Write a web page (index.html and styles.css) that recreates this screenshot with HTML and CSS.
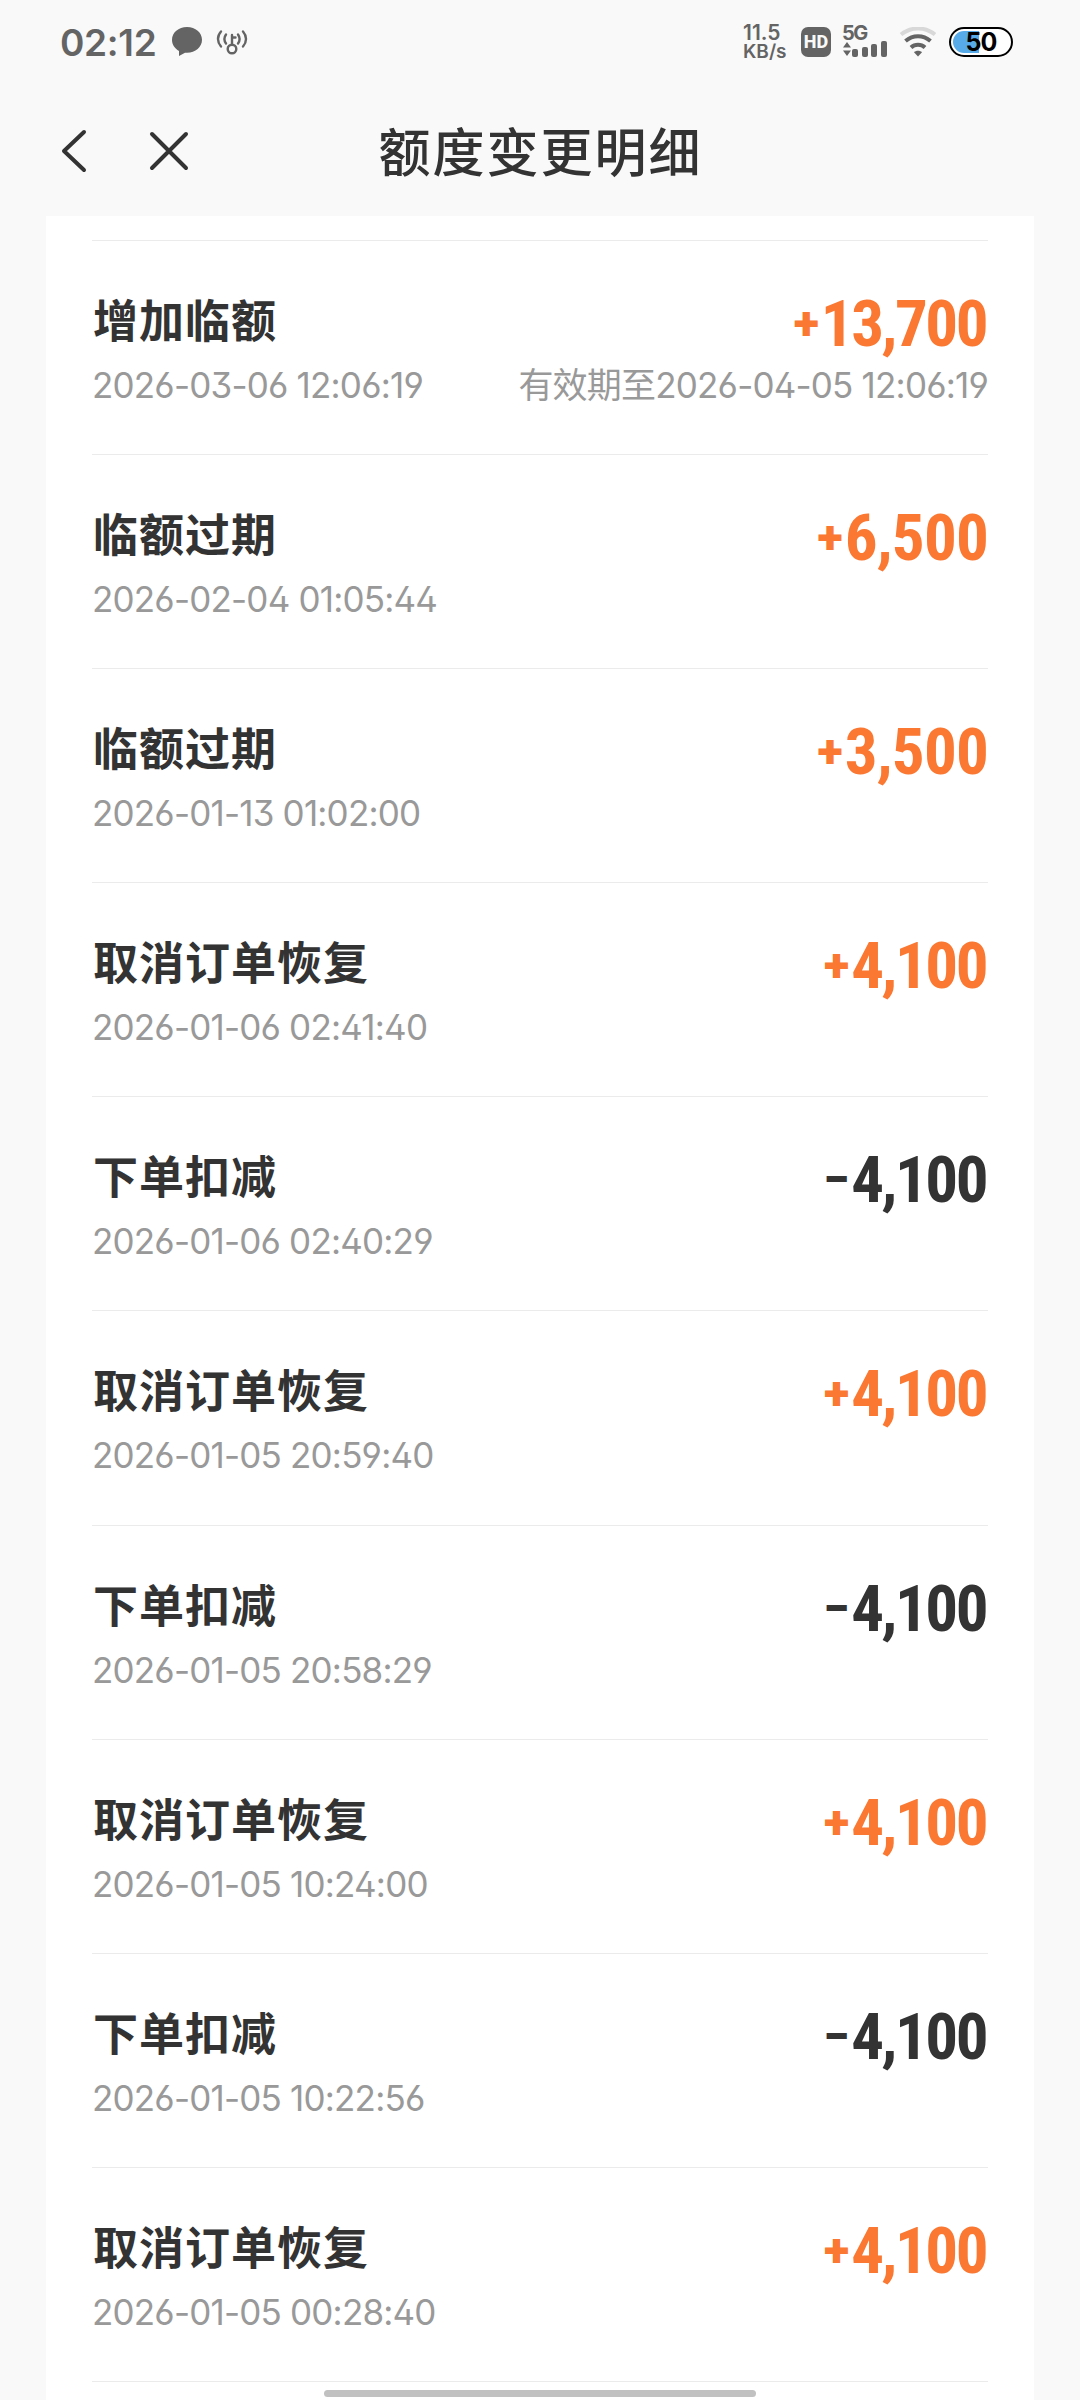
FILE: index.html
```html
<!DOCTYPE html>
<html lang="zh-CN">
  <head>
    <meta charset="UTF-8" />
    <title>额度变更明细</title>
    <link rel="stylesheet" href="styles.css">
  </head>
  <body>
    <!-- Phone status bar -->
    <div class="status-bar">
      <div class="status-left">
        <span class="clock">02:12</span>
        <svg class="icon-chat" width="32" height="32" viewBox="0 0 32 32">
          <path d="M16 1C7.500 1 1 6.500 1 13.800c0 4.900 2.700 8.800 7 11.100v5l6-3.200c.6.100 1.300.100 2 .100 8.500 0 15-5.700 15-13S24.500 1 16 1z" fill="#646464"/>
        </svg>
        <svg class="icon-key" width="32" height="28" viewBox="0 0 32 28" fill="none" stroke="#646464" stroke-width="2.400" stroke-linecap="round">
          <circle cx="16" cy="21" r="4.300"/>
          <path d="M16 16V7M16 9.500h3.500"/>
          <path d="M10 6.500c-2 2.800-2 6.200 0 9M22 6.500c2 2.800 2 6.200 0 9M5 3.500c-4 4.500-4 10.500 0 15M27 3.500c4 4.500 4 10.500 0 15"/>
        </svg>
      </div>
      <div class="status-right">
        <div class="net-speed"><span class="speed-num">11.5</span><span class="speed-unit">KB/s</span></div>
        <span class="hd">HD</span>
        <div class="signal">
          <span class="net-type">5G</span>
          <svg width="46" height="17" viewBox="0 0 46 17" fill="#646464">
            <path d="M1 6.500L5 1l4 5.500zM1 9.500L5 15l4-5.500z"/>
            <rect x="10" y="8" width="6" height="8" rx="2"/>
            <rect x="20" y="6" width="6" height="10" rx="2"/>
            <rect x="29" y="3" width="6" height="13" rx="2"/>
            <rect x="39" y="0" width="6" height="16" rx="2"/>
          </svg>
        </div>
        <svg class="icon-wifi" width="38" height="30" viewBox="0 0 38 30" fill="none" stroke="#646464" stroke-width="4">
          <path d="M2 7.500c10-8 24-8 34 0" stroke="#d8d8d8"/>
          <path d="M6.500 14c7.500-6.500 17.500-6.500 25 0M12 20.500c4-3.600 10-3.600 14 0"/>
          <path d="M19 29.500l-4-4.300c2-2 6-2 8 0z" fill="#646464" stroke="none"/>
        </svg>
        <div class="battery"><div class="battery-level"></div><span>50</span></div>
      </div>
    </div>

    <!-- Page header -->
    <div class="header">
      <div class="nav">
        <svg width="26" height="44" viewBox="0 0 26 44"><path d="M23 3L3 22l20 19" /></svg>
        <svg width="40" height="40" viewBox="0 0 40 40"><path d="M3 3l34 34M37 3L3 37" /></svg>
      </div>
      <h1>额度变更明细</h1>
    </div>

    <!-- Limit change records -->
    <div class="card">
      <div class="row">
        <div class="line"><span class="title">增加临额</span><span class="amount plus tight"><span class="sign">+</span>13,700</span></div>
        <div class="line sub"><span class="date">2026-03-06 12:06:19</span><span class="date">有效期至2026-04-05 12:06:19</span></div>
      </div>
      <div class="row">
        <div class="line"><span class="title">临额过期</span><span class="amount plus"><span class="sign">+</span>6,500</span></div>
        <div class="line sub"><span class="date">2026-02-04 01:05:44</span></div>
      </div>
      <div class="row">
        <div class="line"><span class="title">临额过期</span><span class="amount plus"><span class="sign">+</span>3,500</span></div>
        <div class="line sub"><span class="date">2026-01-13 01:02:00</span></div>
      </div>
      <div class="row">
        <div class="line"><span class="title">取消订单恢复</span><span class="amount plus tight"><span class="sign">+</span>4,100</span></div>
        <div class="line sub"><span class="date">2026-01-06 02:41:40</span></div>
      </div>
      <div class="row">
        <div class="line"><span class="title">下单扣减</span><span class="amount tight"><span class="sign">−</span>4,100</span></div>
        <div class="line sub"><span class="date">2026-01-06 02:40:29</span></div>
      </div>
      <div class="row">
        <div class="line"><span class="title">取消订单恢复</span><span class="amount plus tight"><span class="sign">+</span>4,100</span></div>
        <div class="line sub"><span class="date">2026-01-05 20:59:40</span></div>
      </div>
      <div class="row">
        <div class="line"><span class="title">下单扣减</span><span class="amount tight"><span class="sign">−</span>4,100</span></div>
        <div class="line sub"><span class="date">2026-01-05 20:58:29</span></div>
      </div>
      <div class="row">
        <div class="line"><span class="title">取消订单恢复</span><span class="amount plus tight"><span class="sign">+</span>4,100</span></div>
        <div class="line sub"><span class="date">2026-01-05 10:24:00</span></div>
      </div>
      <div class="row">
        <div class="line"><span class="title">下单扣减</span><span class="amount tight"><span class="sign">−</span>4,100</span></div>
        <div class="line sub"><span class="date">2026-01-05 10:22:56</span></div>
      </div>
      <div class="row">
        <div class="line"><span class="title">取消订单恢复</span><span class="amount plus tight"><span class="sign">+</span>4,100</span></div>
        <div class="line sub"><span class="date">2026-01-05 00:28:40</span></div>
      </div>
      <div class="row"></div>
    </div>
    <div class="home-indicator"></div>
  </body>
</html>
```
FILE: styles.css
```css
* {
  box-sizing: border-box;
}
body {
  margin: 0;
  height: 2400px;
  overflow: hidden;
  background: #f9f9f9;
  color: #333;
  font-family: Inter, "Noto Sans CJK SC", sans-serif;
  font-feature-settings: "ss01", "cv06";
}
svg {
  display: block;
}
/* Status bar */
.status-bar {
  display: flex;
  justify-content: space-between;
  height: 84px;
  padding: 0 67px 0 60px;
  color: #646464;
}
.status-left,
.status-right {
  display: flex;
  align-items: center;
}
.clock {
  width: 97px;
  font-size: 37px;
  font-weight: 600;
  letter-spacing: -0.300px;
  white-space: nowrap;
}
.icon-chat {
  margin-left: 14px;
}
.icon-key {
  margin-left: 13px;
}
.net-speed {
  display: flex;
  flex-direction: column;
  width: 44px;
  font-weight: 600;
  white-space: nowrap;
}
.speed-num {
  font-size: 21px;
  line-height: 19px;
}
.speed-unit {
  font-size: 19px;
  line-height: 19px;
}
.hd {
  width: 30px;
  height: 30px;
  margin-left: 14px;
  border-radius: 7px;
  background: #646464;
  color: #f9f9f9;
  font: 800 18px/30px Roboto, sans-serif;
  text-align: center;
}
.signal {
  margin-left: 11px;
}
.net-type {
  display: block;
  font-size: 20px;
  font-weight: 700;
  line-height: 15px;
  letter-spacing: -1.500px;
}
.icon-wifi {
  margin-left: 11px;
}
.battery {
  position: relative;
  width: 64px;
  height: 30px;
  margin-left: 12px;
  border: 2px solid #000;
  border-radius: 15px;
  background: #fff;
  color: #000;
  text-align: center;
  font-size: 25px;
  font-weight: 700;
  line-height: 26px;
  letter-spacing: -1px;
}
.battery-level {
  position: absolute;
  left: 2px;
  top: 2px;
  width: 26px;
  height: 22px;
  border-radius: 11px 0 0 11px;
  background: #56abe8;
}
.battery span {
  position: relative;
}
/* Header */
.header {
  position: relative;
  height: 132px;
}
.header h1 {
  margin: 0;
  padding-left: 1px;
  font-size: 52px;
  font-weight: 500;
  line-height: 139px;
  letter-spacing: 2px;
  text-align: center;
}
.nav {
  position: absolute;
  left: 61px;
  top: 45px;
  display: flex;
  align-items: center;
  gap: 62px;
}
.nav path {
  fill: none;
  stroke: #333;
  stroke-width: 4;
  stroke-linecap: round;
  stroke-linejoin: round;
}
/* Records */
.card {
  height: 2184px;
  margin: 0 46px;
  padding: 24px 46px 0;
  background: #fff;
  overflow: hidden;
}
.row {
  height: 214.100px;
  padding-top: 48px;
  border-top: 1px solid #ebebeb;
}
.line {
  display: flex;
  justify-content: space-between;
  height: 64px;
  line-height: 64px;
}
.title {
  padding: 1px 0 0 1px;
  font-size: 45px;
  font-weight: 700;
  letter-spacing: 1px;
}
.amount {
  padding-top: 3px;
  font-family: Roboto, sans-serif;
  font-size: 65px;
  font-weight: 700;
  font-stretch: 75%;
  letter-spacing: -0.800px;
}
.tight {
  padding-right: 2px;
  letter-spacing: -2.500px;
}
.plus {
  color: #fa7832;
}
.sign {
  margin-right: 2px;
  font-size: 47px;
  font-weight: 900;
  font-stretch: 100%;
  line-height: 0;
  letter-spacing: 0;
  vertical-align: 7px;
}
.sub {
  color: #999;
}
.date {
  font-size: 35px;
  letter-spacing: -0.800px;
}
.home-indicator {
  position: absolute;
  left: 324px;
  top: 2390px;
  width: 432px;
  height: 7px;
  border-radius: 4px;
  background: #c1c1c1;
}
```
